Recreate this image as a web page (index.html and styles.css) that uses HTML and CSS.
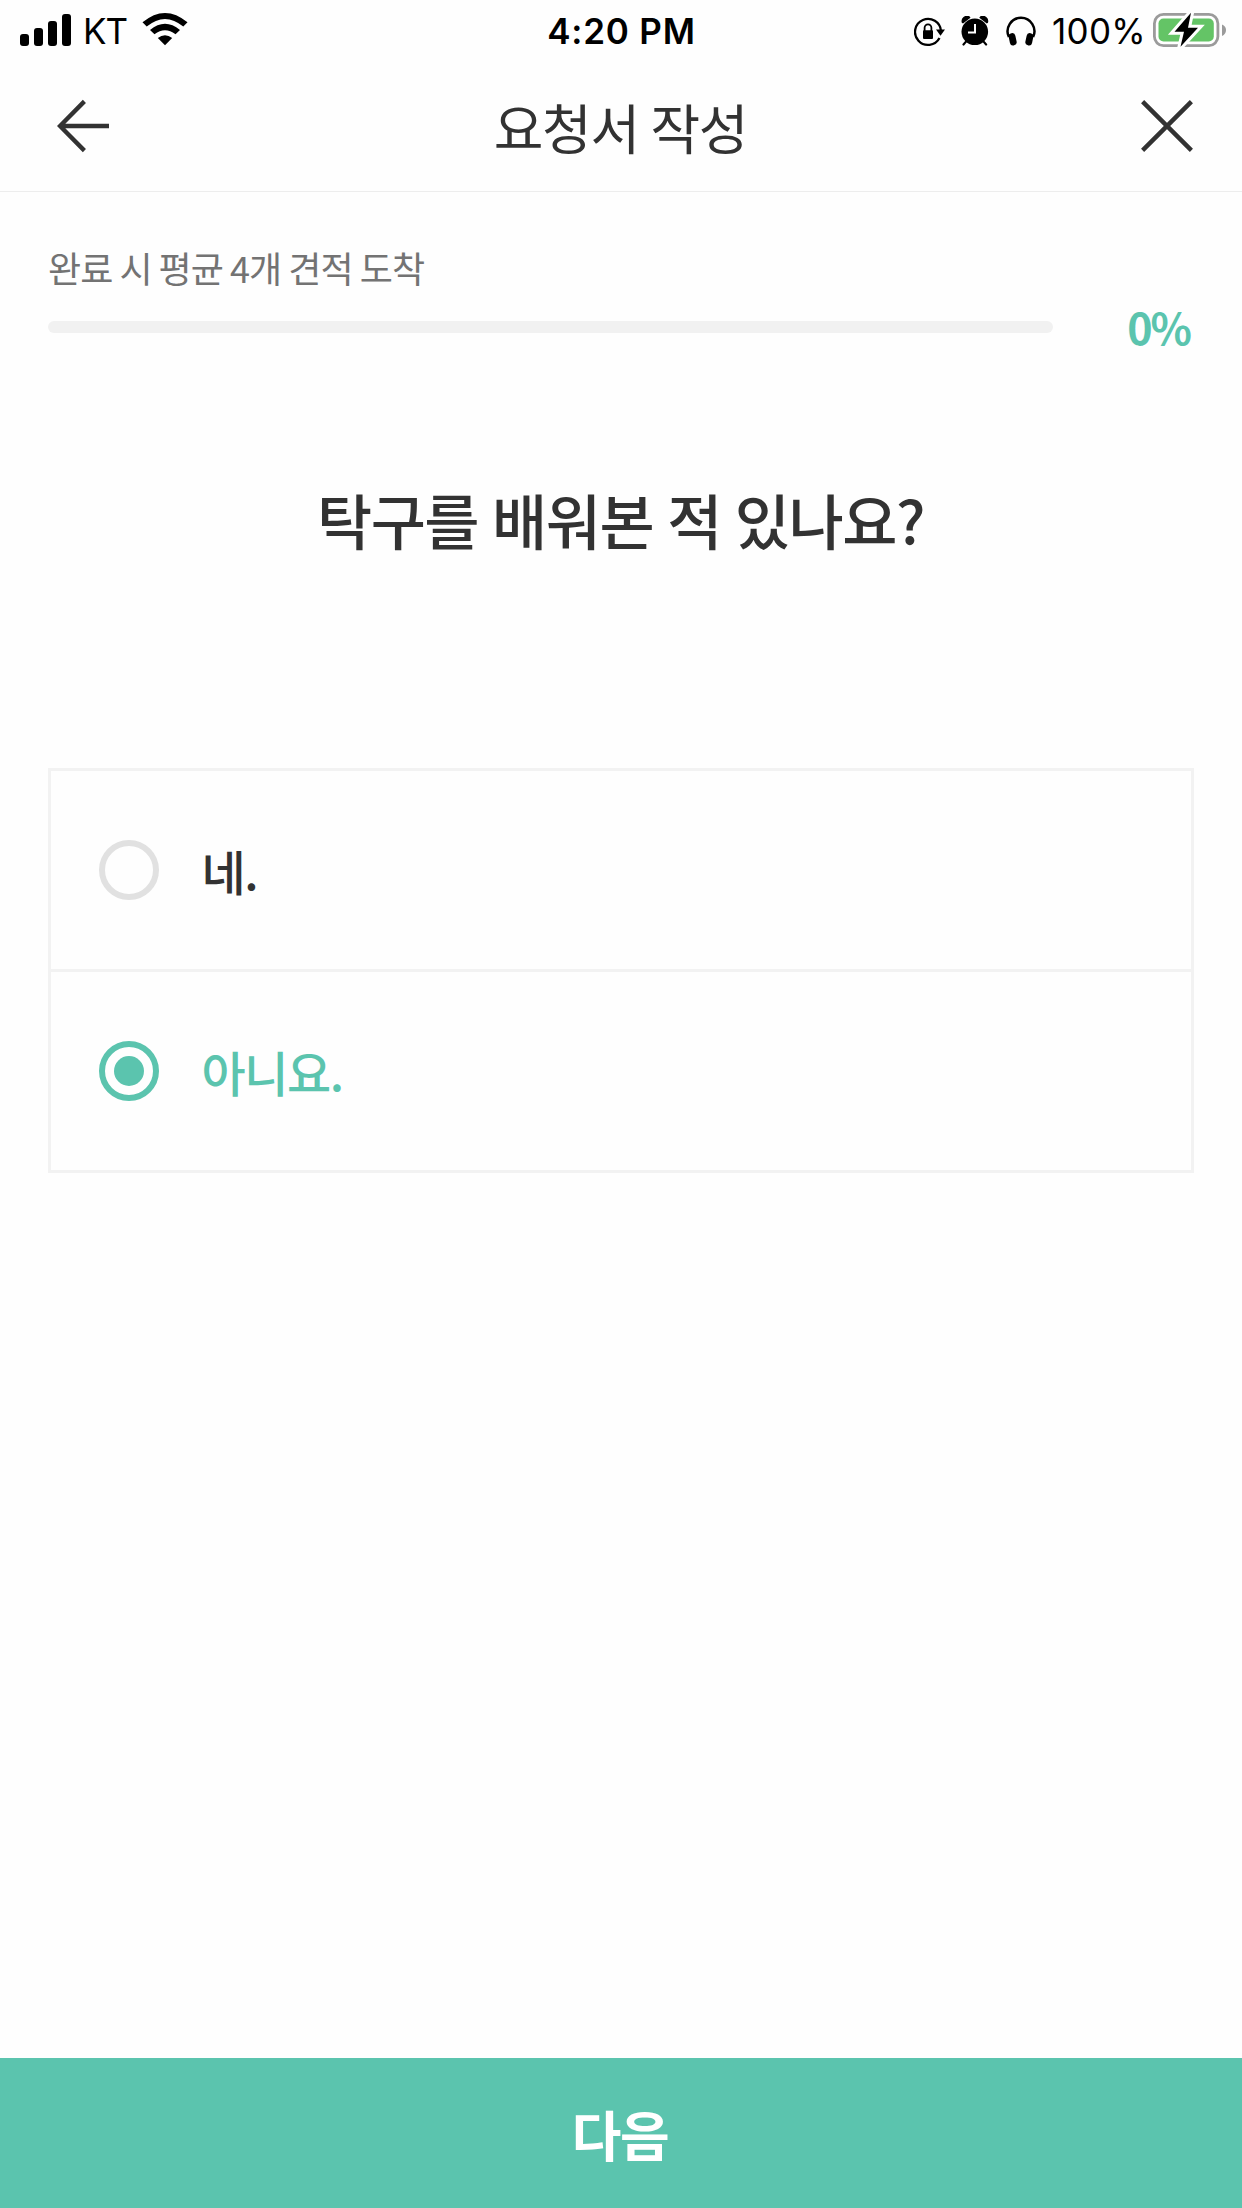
FILE: index.html
```html
<!DOCTYPE html>
<html lang="ko">
<head>
<meta charset="utf-8">
<title>요청서 작성</title>
<link rel="stylesheet" href="styles.css">
</head>
<body>
<div class="screen">
  <div class="status">
    <div class="status-left">
      <svg class="signal" width="51" height="32" viewBox="0 0 51 32"><rect x="0" y="20" width="9" height="12" rx="3"/><rect x="14" y="14" width="9" height="18" rx="3"/><rect x="28" y="7" width="9" height="25" rx="3"/><rect x="42" y="0" width="9" height="32" rx="3"/></svg>
      <span class="carrier">KT</span>
      <svg class="wifi" width="46" height="34" viewBox="0 0 46 34"><path d="M0.5 10.3Q23-8.5 45.5 10.3L41.3 14.6Q23-.8 4.7 14.6Z"/><path d="M8 18Q23 5.6 38 18L33.5 22.3Q23 14 12.5 22.3Z"/><path d="M15.8 26Q23 20.4 30.2 26L23 33.3Z"/></svg>
    </div>
    <div class="time">4:20 PM</div>
    <div class="status-right">
      <svg class="lock" width="32" height="30" viewBox="0 0 32 30"><path d="M25.5 21A13 13 0 1 1 27 14" fill="none" stroke="#000" stroke-width="2.3"/><path d="M22 12.5H31L26.5 18.8Z"/><rect x="9" y="13.3" width="10" height="8.6" rx="1"/><path d="M10.6 14V10.7a3.4 3.4 0 0 1 6.8 0V14" fill="none" stroke="#000" stroke-width="1.8"/></svg>
      <svg class="alarm" width="28" height="30" viewBox="0 0 28 30"><circle cx="13.8" cy="15.8" r="13.3"/><path d="M.8 6.8A5.5 5.5 0 0 1 8.5.3L9.5 1.7L2 7.5ZM27 6.8A5.5 5.5 0 0 0 19.3.3L18.3 1.7L25.8 7.5Z"/><path d="M5.2 25.4L2.5 28.5M22.4 25.4L25.1 28.5" stroke="#000" stroke-width="2.2" stroke-linecap="round"/><path d="M14 8V16.5H7" fill="none" stroke="#fff" stroke-width="2"/></svg>
      <svg class="phones" width="30" height="30" viewBox="0 0 30 30"><path d="M2.9 21A13.4 13.4 0 1 1 27.1 21" fill="none" stroke="#000" stroke-width="2.5"/><rect x="3.2" y="17" width="6.8" height="12.4" rx="3.2" transform="rotate(-12 7 23)"/><rect x="20" y="17" width="6.8" height="12.4" rx="3.2" transform="rotate(12 23 23)"/></svg>
      <span class="percent">100%</span>
      <svg class="battery" width="73" height="36" viewBox="0 0 73 36"><rect x="1.4" y="2.4" width="63.5" height="31.2" rx="9" fill="#fff" stroke="#9b9b9b" stroke-width="2.8"/><rect x="5.5" y="6.5" width="55.3" height="23" rx="5" fill="#64c466"/><path d="M69 12.5Q73 14 73 18T69 24Z" fill="#9b9b9b"/><path d="M38 .8L21.5 19.8H31L27.5 34.8L45 15.7H35Z" fill="#000" stroke="#fff" stroke-width="6" paint-order="stroke"/></svg>
    </div>
  </div>
  <header class="header">
    <svg width="54" height="54" viewBox="0 0 54 54"><path d="M27.4 2.4L3 27L27.4 51.6M4 27H52" fill="none" stroke="#323232" stroke-width="4.4"/></svg>
    <h1>요청서 작성</h1>
    <svg width="54" height="54" viewBox="0 0 54 54"><path d="M2.6 2.6L51.4 51.4M51.4 2.6L2.6 51.4" stroke="#323232" stroke-width="4.4"/></svg>
  </header>
  <main class="content">
    <p class="hint">완료 시 평균 4개 견적 도착</p>
    <div class="progress"><div class="track"></div><span class="value">0%</span></div>
    <h2>탁구를 배워본 적 있나요?</h2>
    <div class="options">
      <div class="option"><i class="radio"></i><span>네.</span></div>
      <div class="option selected"><i class="radio"></i><span>아니요.</span></div>
    </div>
  </main>
  <div class="next">다음</div>
</div>
</body>
</html>
```
FILE: styles.css
```css
* { box-sizing: border-box; margin: 0; padding: 0; }
body { background: #fefefe; color: #323232; font-family: "Noto Sans CJK KR", sans-serif; }
svg { display: block; flex: none; }
.screen { width: 1242px; height: 2208px; display: flex; flex-direction: column; overflow: hidden; }
.status { height: 60px; display: grid; grid-template-columns: 1fr auto 1fr; padding: 0 16px 0 20px; color: #000; font: 400 35px/60px Inter, sans-serif; }
.status-left, .status-right { display: flex; align-items: flex-start; }
.status-right { justify-content: flex-end; }
.signal { margin-top: 14px; }
.carrier { margin-left: 12px; width: 47px; padding-top: 1px; letter-spacing: -1px; }
.wifi { margin: 12px 0 0 12px; }
.time { padding-top: 1px; margin-left: -3px; font-weight: 600; letter-spacing: .8px; }
.lock { margin: 17px 15px 0 0; }
.alarm { margin: 16px 17px 0 0; }
.phones { margin: 16px 16px 0 0; }
.percent { padding-top: 1px; margin-right: 7px; letter-spacing: .3px; white-space: nowrap; }
.battery { margin-top: 12px; }
.header { height: 132px; border-bottom: 1px solid #ededed; display: flex; justify-content: space-between; padding: 39px 48px 0 57px; }
h1 { margin: -2px 10px 0 0; font-size: 54px; line-height: 60px; font-weight: 400; letter-spacing: -1.35px; word-spacing: -2px; }
.content { flex: 1; padding: 51px 48px 0; }
.hint { height: 51px; font-size: 36px; line-height: 48px; color: #737373; letter-spacing: -.9px; word-spacing: -2.2px; }
.progress { height: 66px; display: flex; align-items: center; justify-content: space-between; }
.track { width: 1005px; height: 12px; border-radius: 6px; background: #f1f1f1; }
.value { color: #5bc4ae; font-size: 43px; line-height: 64px; padding: 0 4px 2px 0; font-weight: 700; letter-spacing: -2px; }
h2 { margin-top: 119px; height: 81px; padding-right: 1px; text-align: center; font-size: 60px; line-height: 80px; font-weight: 500; letter-spacing: -1.5px; word-spacing: -1.3px; }
.options { margin-top: 208px; border: 3px solid #f2f2f2; }
.option { height: 198px; display: flex; align-items: center; padding-left: 48px; font-size: 48px; font-weight: 500; letter-spacing: -1.4px; }
.option + .option { border-top: 3px solid #f2f2f2; height: 201px; }
.radio { width: 60px; height: 60px; border: 6px solid #e1e1e1; border-radius: 50%; margin-right: 42.5px; display: grid; place-items: center; }
.selected { color: #5bc4ae; }
.selected .radio { border-color: #5bc4ae; }
.selected .radio::after { content: ""; width: 30px; height: 30px; border-radius: 50%; background: #5bc4ae; }
.next { height: 150px; padding-right: 2px; background: #5bc4ae; color: #fff; text-align: center; font-size: 54px; line-height: 152px; font-weight: 700; letter-spacing: -1.35px; }
```
